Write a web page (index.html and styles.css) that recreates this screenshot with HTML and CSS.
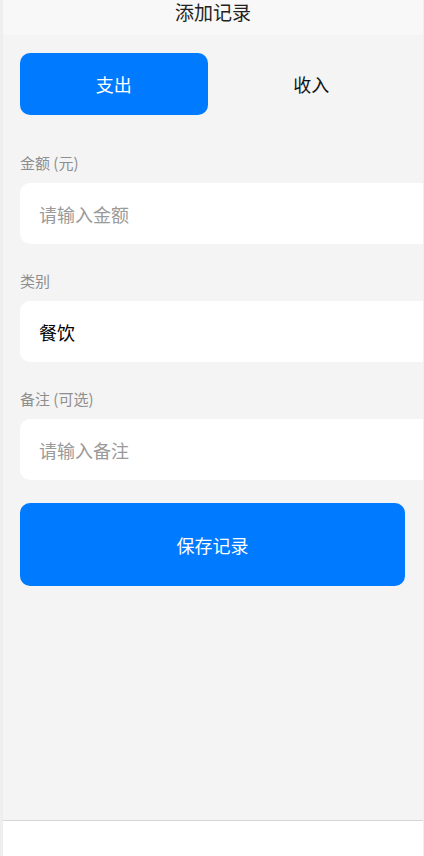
FILE: index.html
```html
<!DOCTYPE html>
<html lang="zh-CN">
<head>
<meta charset="utf-8">
<title>添加记录</title>
<link rel="stylesheet" href="styles.css">
</head>
<body>
<div class="app">
  <header class="header"><h1 class="title">添加记录</h1></header>
  <main class="content">
    <div class="toggle">
      <button class="toggle-btn active">支出</button>
      <button class="toggle-btn">收入</button>
    </div>
    <label class="label label-first">金额 (元)</label>
    <div class="field placeholder">请输入金额</div>
    <label class="label">类别</label>
    <div class="field value">餐饮</div>
    <label class="label">备注 (可选)</label>
    <div class="field placeholder">请输入备注</div>
    <button class="save">保存记录</button>
  </main>
  <footer class="tabbar"></footer>
</div>
</body>
</html>
```
FILE: styles.css
```css
* { box-sizing: border-box; }
html, body { margin: 0; padding: 0; }
body {
  background: #eeeeee;
  font-family: "Noto Sans CJK SC", "Noto Sans", sans-serif;
  width: 424px;
  height: 856px;
  overflow: hidden;
}
.app {
  margin-left: 3px;
  width: 420px;
  height: 856px;
  background: #f4f4f4;
  display: flex;
  flex-direction: column;
  overflow: hidden;
}
.header {
  height: 35px;
  flex: none;
  background: #f8f8f8;
  display: flex;
  justify-content: center;
  padding-top: 1px;
}
.title {
  margin: 0;
  font-size: 19px;
  font-weight: 400;
  line-height: 21px;
  color: #222;
}
.content {
  flex: 1;
  padding: 18px 18px 0 17px;
  display: flex;
  flex-direction: column;
}
.toggle {
  display: grid;
  grid-template-columns: 1fr 1fr;
  gap: 10px;
  height: 62px;
}
.toggle-btn {
  border: none;
  background: transparent;
  font-family: inherit;
  font-size: 18px;
  color: #111;
  border-radius: 10px;
  padding: 0;
}
.toggle-btn.active {
  background: #007aff;
  color: #fff;
}
.label {
  display: block;
  font-size: 15px;
  line-height: 20px;
  color: #8e8e8e;
  margin-top: 27px;
  margin-bottom: 10px;
}
.label-first { margin-top: 38px; }
.field {
  width: 420px;
  height: 61px;
  background: #fff;
  border-radius: 10px;
  padding-left: 19px;
  display: flex;
  align-items: center;
  font-size: 18px;
  flex: none;
}
.placeholder { color: #9a9a9a; }
.value { color: #000; }
.save {
  margin-top: 23px;
  height: 83px;
  border: none;
  border-radius: 10px;
  background: #007aff;
  color: #fff;
  font-family: inherit;
  font-size: 18px;
  padding: 0;
}
.tabbar {
  flex: none;
  height: 36px;
  background: #fff;
  border-top: 1px solid #d6d6d6;
}
```
